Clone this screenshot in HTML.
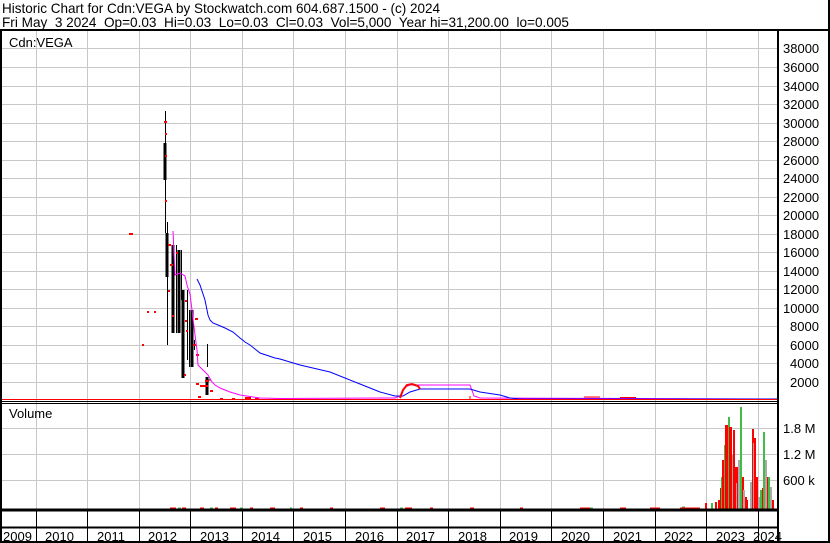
<!DOCTYPE html>
<html><head><meta charset="utf-8"><style>
html,body{margin:0;padding:0;background:#fff;}
svg{display:block;font-family:"Liberation Sans",Arial,sans-serif;}
</style></head><body>
<svg width="830" height="543" viewBox="0 0 830 543" xmlns="http://www.w3.org/2000/svg">
<rect width="830" height="543" fill="#fff"/>
<text x="2" y="13" font-size="14" fill="#000" textLength="438" lengthAdjust="spacingAndGlyphs">Historic Chart for Cdn:VEGA by Stockwatch.com 604.687.1500 - (c) 2024</text>
<text x="2" y="27" font-size="14" fill="#000" textLength="567" lengthAdjust="spacingAndGlyphs" xml:space="preserve">Fri May  3 2024  Op=0.03  Hi=0.03  Lo=0.03  Cl=0.03  Vol=5,000  Year hi=31,200.00  lo=0.005</text>
<g stroke="#c8c8c8" stroke-width="1">
<path d="M36.5 31V509M87.5 31V509M139.5 31V509M190.5 31V509M242.5 31V509M293.5 31V509M345.5 31V509M397.5 31V509M448.5 31V509M500.5 31V509M551.5 31V509M603.5 31V509M655.5 31V509M706.5 31V509M758.5 31V509"/>
<path d="M1 48.5H778M1 67.5H778M1 86.5H778M1 104.5H778M1 123.5H778M1 141.5H778M1 160.5H778M1 178.5H778M1 197.5H778M1 215.5H778M1 234.5H778M1 252.5H778M1 271.5H778M1 289.5H778M1 308.5H778M1 326.5H778M1 345.5H778M1 363.5H778M1 382.5H778"/>
<path d="M1 428.5H778M1 454.5H778M1 480.5H778"/>
</g>
<text x="9" y="47" font-size="13">Cdn:VEGA</text>
<text x="9" y="418" font-size="13">Volume</text>
<g stroke="#000">
<path d="M165.5 111V233M167.5 222V345M173.5 245V333M176.5 245V333M179 250V333M181.5 250V300M183 290V378M187.5 290V360M189.5 310V367M192 310V367M194.5 340V350M207.5 344V367M207.5 377V395M207 380H211" stroke-width="1"/>
<path d="M165 143V180M167 233V277M173 245V333M179 250V333M183 290V378M192 310V367M207 377V395" stroke-width="3"/>
</g>
<g fill="#f00">
<rect x="129" y="233" width="4" height="2"/><rect x="147" y="311" width="2" height="2"/><rect x="154" y="311" width="2" height="2"/><rect x="142" y="344" width="2" height="2"/>
<rect x="164" y="121" width="3" height="2"/><rect x="165" y="133" width="2" height="2"/><rect x="165" y="155" width="2" height="2"/><rect x="165" y="200" width="2" height="2"/>
<rect x="168" y="244" width="3" height="2"/><rect x="170" y="264" width="3" height="2"/><rect x="176" y="252" width="2" height="2"/><rect x="168" y="290" width="2" height="2"/><rect x="172" y="315" width="2" height="2"/><rect x="186" y="330" width="2" height="2"/><rect x="185" y="300" width="2" height="2"/><rect x="184" y="374" width="2" height="2"/>
<rect x="185" y="320" width="2" height="2"/><rect x="195" y="318" width="3" height="2"/><rect x="196" y="354" width="3" height="2"/><rect x="193" y="344" width="3" height="2"/>
<rect x="196" y="383" width="3" height="2"/><rect x="200" y="385" width="8" height="2"/><rect x="205" y="380" width="4" height="2"/><rect x="198" y="396" width="3" height="2"/><rect x="210" y="390" width="3" height="2"/>
<rect x="220" y="398" width="3" height="2"/><rect x="232" y="398" width="3" height="2"/><rect x="245" y="397" width="6" height="2"/><rect x="255" y="398" width="4" height="2"/>
</g>
<path d="M173 231L175 275L180 273L185 276L187 285L190 294L192 310L195 335L197 350L198 365L208 375L212 382L215 385L220 388L230 392L240 395L260 398L280 398.5L395 398L400 396L405 387L410 385L470 385L474 396L480 398L777 399" fill="none" stroke="#f0f" stroke-width="1"/>
<path d="M197 279L200 285L205 300L208 315L210 320L213 323L218 325L225 328L233 332L240 338L245 342L250 345L255 349L260 353L275 358L280 359L300 365L330 372L360 384L380 392L395 396L403 396L410 392L420 389L470 389L480 392L500 395L510 398L520 399L777 399" fill="none" stroke="#00f" stroke-width="1"/>
<path d="M400 398L403 390L407 385L412 384L418 386L420 389" fill="none" stroke="#f00" stroke-width="2"/>
<path d="M470 396V399M584 397H600M620 397.5H636" stroke="#f00" stroke-width="1"/>
<path d="M1 399.5H777" stroke="#f00" stroke-width="1"/>
<path d="M1 401.5H778M1 403.5H778" stroke="#000" stroke-width="1"/>
<g>
<path d="M170 508H176M182 508H186M200 508H204M215 508H218M230 508H236M250 508H253M270 508H275M300 508H303M330 508H333M380 508H385M405 508H412M430 508H433M470 508H474M520 508H523M580 508H590M620 508H626M650 508H660M680 508H700" stroke="#f00" stroke-width="1"/>
<path d="M178 508H181M210 508H213M240 508H243M290 508H292M400 508H403M590 508H593M682 507H685" stroke="#4b4" stroke-width="1"/>
<rect x="705" y="503" width="2" height="6" fill="#f00"/>
<rect x="711" y="503" width="2" height="6" fill="#4b4"/>
<rect x="715" y="502" width="2" height="7" fill="#f00"/>
<rect x="718" y="500" width="2" height="9" fill="#f00"/>
<rect x="720" y="488" width="2" height="21" fill="#f00"/>
<rect x="721" y="477" width="2" height="32" fill="#4b4"/>
<rect x="722" y="460" width="2" height="49" fill="#f00"/>
<rect x="724" y="445" width="2" height="64" fill="#4b4"/>
<rect x="725" y="425" width="3" height="84" fill="#f00"/>
<rect x="728" y="417" width="2" height="92" fill="#4b4"/>
<rect x="729" y="427" width="3" height="82" fill="#f00"/>
<rect x="732" y="455" width="2" height="54" fill="#aaa"/>
<rect x="733" y="430" width="2" height="79" fill="#f00"/>
<rect x="735" y="467" width="2" height="42" fill="#f00"/>
<rect x="736" y="483" width="2" height="26" fill="#aaa"/>
<rect x="737" y="467" width="2" height="42" fill="#f00"/>
<rect x="738" y="460" width="2" height="49" fill="#aaa"/>
<rect x="740" y="407" width="2" height="102" fill="#4b4"/>
<rect x="742" y="477" width="2" height="32" fill="#f00"/>
<rect x="743" y="490" width="2" height="19" fill="#aaa"/>
<rect x="745" y="497" width="2" height="12" fill="#f00"/>
<rect x="746" y="500" width="2" height="9" fill="#f00"/>
<rect x="750" y="482" width="2" height="27" fill="#aaa"/>
<rect x="752" y="429" width="2" height="80" fill="#f00"/>
<rect x="753" y="443" width="2" height="66" fill="#aaa"/>
<rect x="754" y="438" width="2" height="71" fill="#f00"/>
<rect x="756" y="477" width="2" height="32" fill="#f00"/>
<rect x="758" y="497" width="2" height="12" fill="#aaa"/>
<rect x="760" y="490" width="2" height="19" fill="#4b4"/>
<rect x="762" y="488" width="2" height="21" fill="#f00"/>
<rect x="763" y="432" width="2" height="77" fill="#4b4"/>
<rect x="765" y="460" width="2" height="49" fill="#aaa"/>
<rect x="767" y="477" width="2" height="32" fill="#f00"/>
<rect x="768" y="477" width="2" height="32" fill="#4b4"/>
<rect x="770" y="487" width="2" height="22" fill="#aaa"/>
<rect x="772" y="500" width="2" height="9" fill="#f00"/>
</g>
<path d="M1 510H778" stroke="#000" stroke-width="3"/>
<path d="M1 527.5H778" stroke="#000" stroke-width="2"/>
<path d="M1 542H830" stroke="#000" stroke-width="2"/>
<path d="M36.5 509V543M87.5 509V543M139.5 509V543M190.5 509V543M242.5 509V543M293.5 509V543M345.5 509V543M397.5 509V543M448.5 509V543M500.5 509V543M551.5 509V543M603.5 509V543M655.5 509V543M706.5 509V543M758.5 509V543" stroke="#000" stroke-width="1"/>
<path d="M0 30H830" stroke="#000" stroke-width="2"/>
<path d="M1 30V543" stroke="#000" stroke-width="2"/>
<path d="M778 30V543" stroke="#000" stroke-width="2"/>
<path d="M829 0V543" stroke="#000" stroke-width="2"/>
<g font-size="13" fill="#000">
<text x="783" y="53">38000</text><text x="783" y="72">36000</text><text x="783" y="91">34000</text><text x="783" y="109">32000</text><text x="783" y="128">30000</text><text x="783" y="146">28000</text><text x="783" y="165">26000</text><text x="783" y="183">24000</text><text x="783" y="202">22000</text><text x="783" y="220">20000</text><text x="783" y="239">18000</text><text x="783" y="257">16000</text><text x="783" y="276">14000</text><text x="783" y="294">12000</text><text x="783" y="313">10000</text><text x="790" y="331">8000</text><text x="790" y="350">6000</text><text x="790" y="368">4000</text><text x="790" y="387">2000</text>
<text x="783" y="433">1.8 M</text><text x="783" y="459">1.2 M</text><text x="783" y="485">600 k</text>
</g>
<g font-size="13" fill="#000">
<text x="3" y="541">2009</text><text x="45" y="541">2010</text><text x="97" y="541">2011</text><text x="148" y="541">2012</text><text x="200" y="541">2013</text><text x="251" y="541">2014</text><text x="303" y="541">2015</text><text x="355" y="541">2016</text><text x="406" y="541">2017</text><text x="458" y="541">2018</text><text x="509" y="541">2019</text><text x="561" y="541">2020</text><text x="613" y="541">2021</text><text x="664" y="541">2022</text><text x="716" y="541">2023</text><text x="753" y="541">2024</text>
</g>
</svg>
</body></html>
